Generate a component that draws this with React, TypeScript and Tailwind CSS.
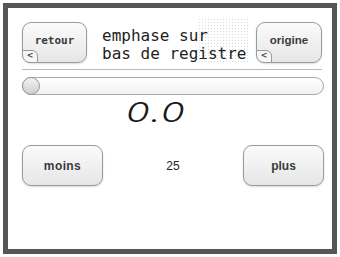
const Tab = () => (
  <span className="absolute left-[-1px] bottom-[-1px] flex h-[13px] w-[16px] items-center justify-center rounded-tr-[6px] rounded-bl-[8px] border border-[#9a9a9a] bg-[#f6f6f6] pb-[1px] font-['DejaVu_Sans',sans-serif] text-[8px] leading-none text-[#444]">
    &lt;
  </span>
);

const App = () => {
  return (
    <div className="h-[257px] w-[340px] bg-white p-[3px]">
      <div className="flex h-[251px] w-[334px] flex-col border-[5px] border-[#565656] bg-white pl-[14px] pr-[10px] pt-[14px]">
        {/* Header */}
        <div className="flex h-[41px] items-center">
          <button className="relative flex h-[41px] w-[65px] items-center justify-center rounded-[9px] border border-[#9a9a9a] bg-gradient-to-b from-[#fbfbfb] to-[#e6e6e6] pb-[3px] font-['DejaVu_Sans_Mono',monospace] text-[11px] font-semibold text-[#3a3a3a] shadow-[0_1px_2px_rgba(0,0,0,0.15)]">
            retour
            <Tab />
          </button>
          <div className="relative ml-[15px] h-[41px] flex-1">
            <div className="absolute left-[96px] top-[-4px] h-[46px] w-[52px] bg-[radial-gradient(circle,#dadada_0.7px,transparent_0.9px)] bg-[length:3px_3px]" />
            <div className="relative pt-[5px] font-['DejaVu_Sans_Mono',monospace] text-[16px] leading-[18px] text-[#1e1e1e]">
              <div>emphase sur</div>
              <div>bas de registre</div>
            </div>
          </div>
          <button className="relative flex h-[41px] w-[66px] items-center justify-center rounded-[9px] border border-[#9a9a9a] bg-gradient-to-b from-[#fbfbfb] to-[#e6e6e6] pb-[3px] font-['Liberation_Sans',sans-serif] text-[11.5px] font-bold text-[#3a3a3a] shadow-[0_1px_2px_rgba(0,0,0,0.15)]">
            origine
            <Tab />
          </button>
        </div>

        {/* Divider */}
        <div className="mt-[6px] h-[1px] w-[300px] bg-[#b8b8b8]" />

        {/* Slider */}
        <div className="mt-[7px] flex h-[18px] w-[302px] items-center rounded-full border border-[#a8a8a8] bg-gradient-to-b from-white to-[#f1f1f1]">
          <div className="ml-[-1px] h-[18px] w-[18px] rounded-full border border-[#9a9a9a] bg-gradient-to-b from-[#f2f2f2] to-[#cfcfcf]" />
        </div>

        {/* Value */}
        <div className="mt-[3px] flex h-[30px] w-[302px] justify-center">
          <span className="mr-[34px] origin-center scale-x-[1.2] scale-y-[0.85] font-['Inter',sans-serif] text-[32px] font-light italic leading-[30px] tracking-[1px] text-[#1a1a1a]">
            0.0
          </span>
        </div>

        {/* Bottom row */}
        <div className="mt-[17px] flex w-[302px] items-center justify-between">
          <button className="flex h-[41px] w-[81px] items-center justify-center rounded-[9px] border border-[#9a9a9a] bg-gradient-to-b from-[#fbfbfb] to-[#e6e6e6] font-['Liberation_Sans',sans-serif] text-[12px] font-bold tracking-[0.4px] text-[#3a3a3a] shadow-[0_1px_2px_rgba(0,0,0,0.15)]">
            moins
          </button>
          <span className="font-['Liberation_Sans',sans-serif] text-[12px] text-[#222]">25</span>
          <button className="flex h-[41px] w-[81px] items-center justify-center rounded-[9px] border border-[#9a9a9a] bg-gradient-to-b from-[#fbfbfb] to-[#e6e6e6] font-['Liberation_Sans',sans-serif] text-[12px] font-bold text-[#3a3a3a] shadow-[0_1px_2px_rgba(0,0,0,0.15)]">
            plus
          </button>
        </div>
      </div>
    </div>
  );
};

export default App;
